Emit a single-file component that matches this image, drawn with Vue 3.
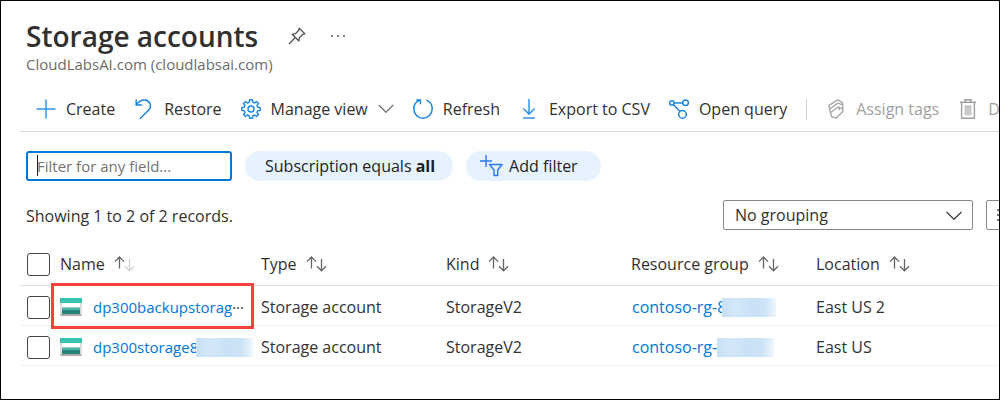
<script setup>
import { ref } from 'vue'

const filter = ref('')
const grouping = ref('No grouping')

const columns = [
  { key: 'name', label: 'Name', sorted: true },
  { key: 'type', label: 'Type' },
  { key: 'kind', label: 'Kind' },
  { key: 'group', label: 'Resource group' },
  { key: 'location', label: 'Location' }
]

const rows = [
  { name: 'dp300backupstorag', more: true, type: 'Storage account', kind: 'StorageV2', group: 'contoso-rg-8', location: 'East US 2', marked: true },
  { name: 'dp300storage8', masked: true, type: 'Storage account', kind: 'StorageV2', group: 'contoso-rg-', location: 'East US' }
]
</script>

<template>
  <main class="page">
    <header class="head">
      <div class="title-row">
        <h1>Storage accounts</h1>
        <button class="plain pin" aria-label="Pin">
          <svg width="18" height="18" viewBox="0 0 18 18" fill="none" stroke="#555" stroke-width="1.3" stroke-linejoin="round">
            <path d="M11.2 1.2 16.8 6.8 14.8 7.3 11.4 10.7 10.9 14 4.2 7.3 7.4 6.7 10.8 3.2ZM7.3 10.5 1 17" />
          </svg>
        </button>
        <button class="plain dots" aria-label="More">
          <svg width="16" height="4" viewBox="0 0 16 4" fill="#666"><circle cx="2" cy="2" r="1.1" /><circle cx="8" cy="2" r="1.1" /><circle cx="14" cy="2" r="1.1" /></svg>
        </button>
      </div>
      <p class="tenant">CloudLabsAI.com (cloudlabsai.com)</p>
    </header>

    <nav class="toolbar" aria-label="Commands">
      <button class="plain cmd">
        <svg width="20" height="20" viewBox="0 0 20 20" fill="none" stroke="#3595e3" stroke-width="1.5"><path d="M10 .5V19.5M.5 10H19.5" /></svg>
        Create
      </button>
      <button class="plain cmd">
        <svg width="20" height="20" viewBox="0 0 20 20" fill="none" stroke="#1b86dd" stroke-width="1.5"><path d="M2.2 .5V6H8M2.4 5.8C5 2.2 8.5.5 11.5 1.1 16.2 2.1 17.8 7.1 15.2 10.6L6 19.7" /></svg>
        Restore
      </button>
      <button class="plain cmd">
        <svg width="20" height="20" viewBox="0 0 20 20" fill="none" stroke="#1b86dd" stroke-width="1.4" stroke-linejoin="round">
          <path d="M8.3 3.2 8.6.8H11.4L11.7 3.2 13.6 4 15.5 2.5 17.5 4.5 16 6.4 16.8 8.3 19.2 8.6V11.4L16.8 11.7 16 13.6 17.5 15.5 15.5 17.5 13.6 16 11.7 16.8 11.4 19.2H8.6L8.3 16.8 6.4 16 4.5 17.5 2.5 15.5 4 13.6 3.2 11.7.8 11.4V8.6L3.2 8.3 4 6.4 2.5 4.5 4.5 2.5 6.4 4Z" />
          <circle cx="10" cy="10" r="3" />
        </svg>
        Manage view
        <svg class="chev" width="16" height="10" viewBox="0 0 16 10" fill="none" stroke="#777" stroke-width="1.3"><path d="M.8 1 8 8.3 15.2 1" /></svg>
      </button>
      <button class="plain cmd">
        <svg width="20" height="20" viewBox="0 0 20 20" fill="none" stroke="#1b86dd" stroke-width="1.5"><path d="M3.3 .9H7.4V5.2M7.2 1.1C3.3 2.3.8 5.8.8 9.8.8 15 5 19.2 10 19.2S19.2 15 19.2 9.8C19.2 6 17 2.6 13.4 1.1" /></svg>
        Refresh
      </button>
      <button class="plain cmd">
        <svg width="20" height="20" viewBox="0 0 20 20" fill="none" stroke="#3595e3" stroke-width="1.5"><path d="M10 0V15M4.3 9.5 10 15.1 15.7 9.5M4 19H16" /></svg>
        Export to CSV
      </button>
      <button class="plain cmd">
        <svg width="20" height="20" viewBox="0 0 20 20" fill="none" stroke="#1b86dd" stroke-width="1.5"><circle cx="2.8" cy="4" r="2.2" /><circle cx="16.6" cy="3.8" r="2.8" /><circle cx="13.5" cy="15.4" r="3.8" /><path d="M5 4H13.8M4.4 5.6 11 12.5" /></svg>
        Open query
      </button>
      <span class="divider"></span>
      <button class="plain cmd off" disabled>
        <svg width="20" height="20" viewBox="0 0 20 20" fill="none" stroke="#a8a8a8" stroke-width="1.4" stroke-linejoin="round"><path d="M2.8 6.7 11.7.8 16 3.2 16.8 6V12.5L10 19.2 5.5 17.5ZM3.5 10 12 4.2 16.8 6M4.5 13.7 12.5 7.8 16.7 10M12.5 7.8 13.5 11" /></svg>
        Assign tags
      </button>
      <button class="plain cmd off" disabled>
        <svg width="20" height="20" viewBox="0 0 20 20" fill="none" stroke="#a0a0a0" stroke-width="1.4"><path d="M2 3.2H18M7 3V.8H13V3M3.6 3.5V19.2H16.4V3.5" /><path d="M6.5 6.3H13.5V16.3H6.5Z" fill="#c8c8c8" stroke="none" /></svg>
        Delete
      </button>
    </nav>

    <div class="filters">
      <label class="search">
        <input v-model="filter" type="text" placeholder="Filter for any field..." aria-label="Filter for any field" />
        <span class="caret"></span>
      </label>
      <button class="plain pill">Subscription equals&nbsp;<b>all</b></button>
      <button class="plain pill add">
        <svg width="23" height="22" viewBox="0 0 23 22" fill="none" stroke="#2878e8" stroke-width="1.4"><path d="M6 0V12M0 6H12" /><path d="M9.5 9.5H22L17.7 15V20.5H14V15Z" stroke-linejoin="round" /></svg>
        Add filter
      </button>
    </div>

    <div class="summary">
      <p>Showing 1 to 2 of 2 records.</p>
      <div class="views">
        <div class="picker">
          <select v-model="grouping" aria-label="Grouping"><option>No grouping</option></select>
          <svg width="16" height="10" viewBox="0 0 16 10" fill="none" stroke="#444" stroke-width="1.3"><path d="M.5 1 8 8.3 15.5 1" /></svg>
        </div>
        <button class="plain list" aria-label="List view">
          <svg width="16" height="14" viewBox="0 0 16 14" stroke="#555" stroke-width="1.3"><path d="M0 2H2M0 7H2M0 12H2M4 2H16M4 7H16M4 12H16" /></svg>
        </button>
      </div>
    </div>

    <table>
      <colgroup><col class="c-check" /><col class="c-name" /><col class="c-mid" /><col class="c-mid" /><col class="c-mid" /><col /></colgroup>
      <thead>
        <tr>
          <th><input type="checkbox" aria-label="Select all" /></th>
          <th v-for="col in columns" :key="col.key" scope="col">
            <button class="plain sort">
              {{ col.label }}
              <svg width="21" height="16" viewBox="0 0 21 16" fill="none" stroke="#666" stroke-width="1.3">
                <path d="M5.5 12.5V1.2M1 5.6 5.5 1 10 5.6" />
                <path :class="{ faint: col.sorted }" d="M15.5 3V14.7M11 10.2 15.5 14.8 20 10.2" />
              </svg>
            </button>
          </th>
        </tr>
      </thead>
      <tbody>
        <tr v-for="row in rows" :key="row.name">
          <td><input type="checkbox" :aria-label="'Select ' + row.name" /></td>
          <td>
            <div class="name">
              <svg width="22" height="18" viewBox="0 0 22 18"><path fill="#dedede" d="M0 4H22V16.5L21 18H1L0 16.5Z" /><path fill="#37c2b1" d="M0 0H22V5H0Z" /><path fill="#fff" d="M2 5H20V9.5H2Z" /><path fill="#258277" d="M2 12H20V16H2Z" /><path fill="#4fb3a7" d="M2 9.5H20V12H2Z" /><path fill="#aaa" d="M0 16H22L21 18H1Z" /></svg>
              <a href="#">{{ row.name }}</a><span v-if="row.more" class="more">···</span><span v-if="row.masked" class="mask"></span>
              <span v-if="row.marked" class="marker"></span>
            </div>
          </td>
          <td>{{ row.type }}</td>
          <td>{{ row.kind }}</td>
          <td><div class="group"><a href="#">{{ row.group }}</a><span class="mask" :class="{ over: row.marked }"></span></div></td>
          <td>{{ row.location }}</td>
        </tr>
      </tbody>
    </table>
  </main>
</template>

<style>
body { background: #fff; }
</style>

<style scoped>
* { box-sizing: border-box; }
.page {
  min-height: 100vh;
  border: 1px solid #000;
  padding: 16px 0 32px 19px;
  overflow: hidden;
  color: #323130;
  font: 16px/20px "Open Sans", "Noto Sans", sans-serif;
}
.plain { border: 0; padding: 0; background: none; color: inherit; font: inherit; white-space: nowrap; }
.head { padding-left: 6px; }
.title-row { display: flex; align-items: center; height: 38px; }
h1 { margin: 0; font-size: 28px; line-height: 38px; font-weight: 600; }
.pin { margin-left: 30px; height: 18px; display: flex; }
.dots { margin-left: 24px; height: 4px; display: flex; }
.tenant { margin: 0; font-size: 15px; line-height: 18px; color: #6e6c6a; }
.toolbar {
  display: flex;
  align-items: center;
  gap: 19px;
  height: 45px;
  margin-top: 14px;
  padding-left: 16px;
  border-bottom: 1px solid #dcdcdc;
}
.cmd { display: flex; align-items: center; gap: 10px; flex: none; }
.cmd svg { flex: none; }
.off { color: #a19f9d; }
.divider { flex: none; width: 1px; height: 21px; background: #d2d0ce; }
.filters { display: flex; gap: 13px; padding: 19px 0 0 6px; }
.search { position: relative; width: 206px; }
.search input {
  width: 100%;
  height: 30px;
  border: 2px solid #0078d4;
  border-radius: 3px;
  padding: 0 9px;
  outline: 0;
  color: inherit;
  font: inherit;
  font-size: 15px;
}
.search input::placeholder { color: #757371; }
.caret { position: absolute; left: 11px; top: 4px; width: 1px; height: 21px; background: #222; }
.pill { display: flex; align-items: center; height: 30px; padding: 0 18px 0 20px; border-radius: 15px; background: #e6f2fe; color: #201f1e; }
.add { padding: 0 23px 0 14px; gap: 6px; }
.summary { display: flex; justify-content: space-between; align-items: center; height: 30px; margin-top: 19px; padding-left: 6px; }
.summary p { margin: 2px 0 0; }
.views { display: flex; gap: 13px; margin-right: -20px; }
.picker { position: relative; width: 250px; }
.picker select { appearance: none; width: 100%; height: 30px; border: 1px solid #8a8886; border-radius: 2px; padding: 0 11px; background: #fff; color: inherit; font: inherit; }
.picker svg { position: absolute; right: 11px; top: 11px; pointer-events: none; }
.list { display: flex; align-items: center; width: 33px; height: 30px; padding-left: 10px; border: 1px solid #8a8886; border-radius: 2px; }
table { width: 100%; margin-top: 16px; border-collapse: separate; border-spacing: 0; table-layout: fixed; }
.c-check { width: 40px; }
.c-name { width: 201px; }
.c-mid { width: 185px; }
th, td { height: 40px; padding: 0; border-bottom: 1px solid #f0f0f0; text-align: left; font-weight: 400; white-space: nowrap; }
th { padding-bottom: 3px; border-color: #dfdfdf; }
td { padding-top: 3px; }
th:first-child, td:first-child { padding-left: 7px; }
input[type="checkbox"] { appearance: none; display: block; width: 23px; height: 23px; margin: 0; border: 1px solid #444; border-radius: 3px; background: #fff; }
.sort { display: flex; align-items: center; gap: 9px; }
.faint { stroke: #d6ced2; }
.name { position: relative; display: flex; align-items: center; height: 36px; font-size: 15px; }
.name svg { margin-right: 11px; }
a { color: #0078d4; text-decoration: none; }
.group { display: flex; align-items: center; padding-left: 1px; }
.mask {
  width: 57px;
  height: 19px;
  background: linear-gradient(90deg, #c8e0f5 0, #d3e7f8 25%, #c9e1f6 55%, #cde3f6 80%, #eff7fd 100%);
}
.name .mask { margin-left: -2px; }
.mask.over { width: 54px; margin-left: -4px; }
.marker { position: absolute; left: -9px; top: -6px; width: 203px; height: 46px; border: 3px solid #f8403f; pointer-events: none; }
</style>
